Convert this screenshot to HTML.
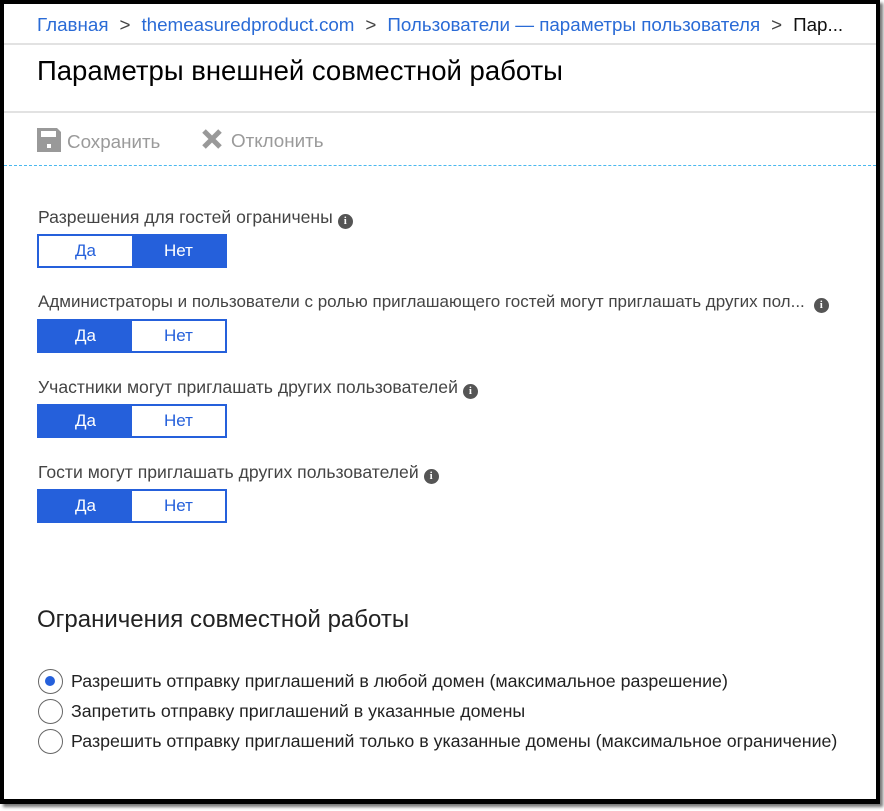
<!DOCTYPE html>
<html><head><meta charset="utf-8"><style>
*{margin:0;padding:0;box-sizing:border-box}
body{width:884px;height:811px;background:#fff;font-family:"Liberation Sans",sans-serif;position:relative;overflow:hidden}
.frame{position:absolute;left:0;top:0;width:880px;height:804px;border:4px solid #000;border-bottom-width:5px;box-shadow:3px 3px 3px #777;background:#fff}
.abs{position:absolute;white-space:nowrap}
.bc{top:14px;left:37px;font-size:18.8px;color:#2a6bd6}
.bc .s{color:#444;margin:0 11px}
.bc .k{color:#111}
.hr{position:absolute;left:0;right:0;height:2px;background:#e2e2e2}
.title{top:55px;left:37px;font-size:27.5px;color:#000}
.tb{top:128px;font-size:18.8px;color:#9a9a9a}
.lab{left:38px;font-size:17.6px;color:#444}
.info{display:inline-block;width:15px;height:15px;border-radius:50%;background:#555;color:#fff;font-size:11px;font-weight:bold;text-align:center;line-height:15px;vertical-align:-1px;margin-left:5px;font-family:"Liberation Serif",serif}
.tg{position:absolute;left:37px;width:190px;height:34px;border:2px solid #2560db;display:flex}
.tg div{flex:1;text-align:center;line-height:30px;font-size:17px;color:#2560db;background:#fff}
.tg div.on{background:#2560db;color:#fff}
.h2{top:606px;left:37px;font-size:24px;color:#222}
.r{left:38px;font-size:17.8px;color:#222}
.r i{display:inline-block;width:25px;height:25px;border:1.5px solid #666;border-radius:50%;vertical-align:middle;margin-right:8px;position:relative;top:-1px}
.r i.on:after{content:"";position:absolute;left:6px;top:6px;width:10px;height:10px;border-radius:50%;background:#2560db}
</style></head><body>
<div class="frame"></div>
<div class="abs bc">Главная<span class="s">&gt;</span>themeasuredproduct.com<span class="s">&gt;</span>Пользователи — параметры пользователя<span class="s">&gt;</span><span class="k">Пар...</span></div>
<div class="hr" style="top:43px;left:4px;right:8px"></div>
<div class="abs title">Параметры внешней совместной работы</div>
<div class="hr" style="top:111px;left:4px;right:8px"></div>
<div class="abs tb" style="left:37px"><svg width="24" height="24" viewBox="0 0 24 24" style="vertical-align:-4px;margin-right:6px"><path d="M0 0H20L24 4V24H0Z M4 3V9H19V3Z M10 16H14V20H10Z" fill="#999" fill-rule="evenodd"/></svg>Сохранить</div>
<div class="abs tb" style="left:201px"><svg width="22" height="22" viewBox="0 0 22 22" style="vertical-align:-3px;margin-right:8px"><path d="M3 3L19 19M19 3L3 19" stroke="#999" stroke-width="5"/></svg>Отклонить</div>
<div style="position:absolute;top:165px;left:4px;right:8px;border-top:1px dashed #4ab8ee"></div>
<div class="abs lab" style="top:207px">Разрешения для гостей ограничены<span class="info">i</span></div>
<div class="tg" style="top:234px"><div>Да</div><div class="on">Нет</div></div>
<div class="abs lab" style="top:292px;font-size:17px">Администраторы и пользователи с ролью приглашающего гостей могут приглашать других пол...<span class="info" style="margin-left:9px">i</span></div>
<div class="tg" style="top:319px"><div class="on">Да</div><div>Нет</div></div>
<div class="abs lab" style="top:377px">Участники могут приглашать других пользователей<span class="info">i</span></div>
<div class="tg" style="top:404px"><div class="on">Да</div><div>Нет</div></div>
<div class="abs lab" style="top:462px">Гости могут приглашать других пользователей<span class="info">i</span></div>
<div class="tg" style="top:489px"><div class="on">Да</div><div>Нет</div></div>
<div class="abs h2">Ограничения совместной работы</div>
<div class="abs r" style="top:670px"><i class="on"></i>Разрешить отправку приглашений в любой домен (максимальное разрешение)</div>
<div class="abs r" style="top:700px"><i></i>Запретить отправку приглашений в указанные домены</div>
<div class="abs r" style="top:730px"><i></i>Разрешить отправку приглашений только в указанные домены (максимальное ограничение)</div>
</body></html>
